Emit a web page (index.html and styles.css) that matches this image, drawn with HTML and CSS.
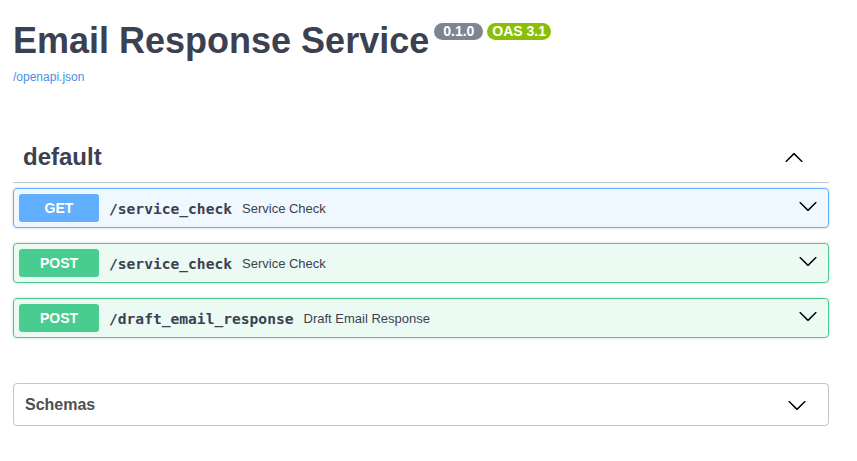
FILE: index.html
```html
<!DOCTYPE html>
<html lang="en">
<head>
<meta charset="utf-8">
<title>Email Response Service</title>
<link rel="stylesheet" href="styles.css">
</head>
<body>
<div class="page">
  <div class="info">
    <h2 class="title">Email Response Service
      <span class="badge badge-version">0.1.0</span>
      <span class="badge badge-oas">OAS 3.1</span>
    </h2>
    <a class="spec-link" href="#">/openapi.json</a>
  </div>

  <div class="tag">
    <h3 class="tag-name">default</h3>
    <svg class="arrow-up" width="20" height="20" viewBox="0 0 20 20"><path d="M17.418 14.908c.272.268.709.268.979 0s.271-.701 0-.969l-7.908-7.83c-.27-.268-.707-.268-.979 0l-7.908 7.83c-.27.268-.27.701 0 .969.271.268.709.268.979 0L10 7.767l7.418 7.141z"/></svg>
  </div>

  <div class="ops">
    <div class="op op-get">
      <span class="method method-get">GET</span>
      <span class="path">/service_check</span>
      <span class="desc">Service Check</span>
      <svg class="arrow-down" width="20" height="20" viewBox="0 0 20 20"><path d="M17.418 6.109c.272-.268.709-.268.979 0s.271.701 0 .969l-7.908 7.83c-.27.268-.707.268-.979 0l-7.908-7.83c-.27-.268-.27-.701 0-.969.271-.268.709-.268.979 0L10 13.25l7.418-7.141z"/></svg>
    </div>
    <div class="op op-post">
      <span class="method method-post">POST</span>
      <span class="path">/service_check</span>
      <span class="desc">Service Check</span>
      <svg class="arrow-down" width="20" height="20" viewBox="0 0 20 20"><path d="M17.418 6.109c.272-.268.709-.268.979 0s.271.701 0 .969l-7.908 7.83c-.27.268-.707.268-.979 0l-7.908-7.83c-.27-.268-.27-.701 0-.969.271-.268.709-.268.979 0L10 13.25l7.418-7.141z"/></svg>
    </div>
    <div class="op op-post">
      <span class="method method-post">POST</span>
      <span class="path">/draft_email_response</span>
      <span class="desc">Draft Email Response</span>
      <svg class="arrow-down" width="20" height="20" viewBox="0 0 20 20"><path d="M17.418 6.109c.272-.268.709-.268.979 0s.271.701 0 .969l-7.908 7.83c-.27.268-.707.268-.979 0l-7.908-7.83c-.27-.268-.27-.701 0-.969.271-.268.709-.268.979 0L10 13.25l7.418-7.141z"/></svg>
    </div>
  </div>

  <div class="models">
    <h4 class="models-title">Schemas</h4>
    <svg class="arrow-down models-arrow" width="20" height="20" viewBox="0 0 20 20"><path d="M17.418 6.109c.272-.268.709-.268.979 0s.271.701 0 .969l-7.908 7.83c-.27.268-.707.268-.979 0l-7.908-7.83c-.27-.268-.27-.701 0-.969.271-.268.709-.268.979 0L10 13.25l7.418-7.141z"/></svg>
  </div>
</div>
</body>
</html>
```

FILE: styles.css
```css
html, body {
  margin: 0;
  padding: 0;
  background: #ffffff;
}

body {
  font-family: "Liberation Sans", Arial, sans-serif;
  color: #3b4151;
}

.page {
  padding: 19px 28px 0 13px;
}

.info {
  display: flex;
  flex-direction: column;
  align-items: flex-start;
}

.title {
  display: flex;
  align-items: flex-start;
  margin: 0;
  font-size: 36px;
  line-height: 44px;
  font-weight: 700;
  color: #3b4151;
}

.badge {
  display: inline-block;
  margin-top: 4px;
  font-size: 14px;
  line-height: 17px;
  font-weight: 700;
  color: #ffffff;
  border-radius: 57px;
}

.badge-version {
  margin-left: 5px;
  padding: 0 9px;
  background: #7d8492;
}

.badge-oas {
  margin-left: 4px;
  padding: 0 5px;
  background: #89bf04;
}

.spec-link {
  margin-top: 7px;
  font-size: 12px;
  line-height: 14px;
  color: #4990e2;
  text-decoration: none;
}

.tag {
  display: flex;
  align-items: center;
  justify-content: space-between;
  margin-top: 49px;
  padding: 10px 25px 11px 10px;
  border-bottom: 1px solid rgba(59, 65, 81, 0.3);
}

.tag-name {
  margin: 0;
  font-size: 24px;
  line-height: 28px;
  font-weight: 700;
  color: #3b4151;
}

.arrow-up, .arrow-down {
  display: block;
  fill: #000000;
  flex: none;
}

.ops {
  display: flex;
  flex-direction: column;
  gap: 15px;
  margin-top: 5px;
}

.op {
  display: flex;
  align-items: center;
  padding: 5px 10px 5px 5px;
  border: 1px solid;
  border-radius: 4px;
  box-shadow: 0 0 3px rgba(0, 0, 0, 0.19);
}

.op-get {
  background: rgba(97, 175, 254, 0.1);
  border-color: #61affe;
}

.op-post {
  background: rgba(73, 204, 144, 0.1);
  border-color: #49cc90;
}

.method {
  min-width: 80px;
  padding: 6px 0;
  font-size: 14px;
  line-height: 16px;
  font-weight: 700;
  text-align: center;
  color: #ffffff;
  border-radius: 3px;
}

.method-get {
  background: #61affe;
}

.method-post {
  background: #49cc90;
}

.path {
  padding: 0 10px 0 10px;
  font-family: "DejaVu Sans Mono", "Liberation Mono", monospace;
  font-size: 14.6px;
  font-weight: 700;
  color: #3b4151;
}

.desc {
  flex: 1;
  font-size: 13px;
  color: #3b4151;
}

.op .arrow-down {
  margin-top: -4px;
}

.models {
  display: flex;
  align-items: center;
  justify-content: space-between;
  margin-top: 45px;
  padding: 10px 21px 10px 11px;
  border: 1px solid rgba(59, 65, 81, 0.3);
  border-radius: 4px;
}

.models-title {
  margin: 0;
  font-size: 16px;
  line-height: 20px;
  font-weight: 700;
  color: #505050;
}

.models-arrow {
  margin-top: 1px;
}
```
